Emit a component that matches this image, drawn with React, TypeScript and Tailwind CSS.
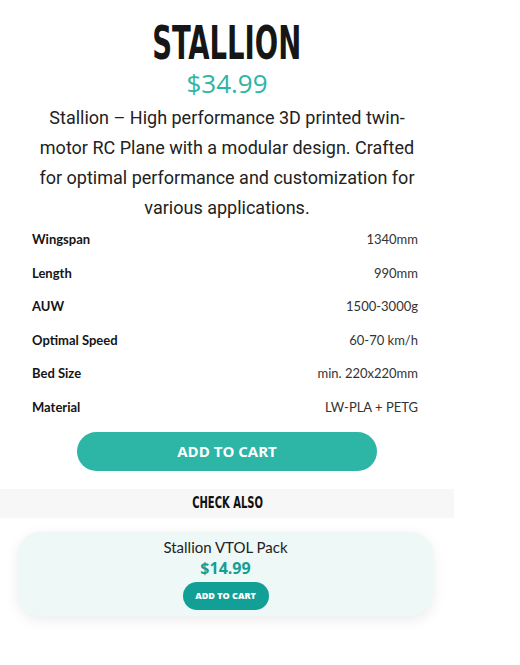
import React from 'react';

const specs: [string, string][] = [
  ['Wingspan', '1340mm'],
  ['Length', '990mm'],
  ['AUW', '1500-3000g'],
  ['Optimal Speed', '60-70 km/h'],
  ['Bed Size', 'min. 220x220mm'],
  ['Material', 'LW-PLA + PETG'],
];

const App: React.FC = () => {
  return (
    <div className="w-[454px] bg-white pb-[40px]">
      <div className="flex flex-col items-center pt-[21px]">
        <h1 className="h-[44px] text-[47px] leading-[44px] font-bold text-[#161616] font-['DejaVu_Sans_Condensed',sans-serif] scale-x-[0.65]">
          STALLION
        </h1>
        <div className="mt-[5px] h-[26px] text-[26px] leading-[26px] text-[#2db5a5] font-['Open_Sans',sans-serif]">
          $34.99
        </div>
        <p className="mt-[7px] px-[27px] text-center text-[18px] leading-[30px] text-[#222] font-['Roboto',sans-serif]">
          Stallion – High performance 3D printed twin-motor RC Plane with a modular design. Crafted for optimal performance and customization for various applications.
        </p>
      </div>

      <div className="pl-[32px] pr-[36px] font-['Lato',sans-serif] text-[13px]">
        {specs.map(([label, value]) => (
          <div key={label} className="flex h-[33.5px] items-center justify-between">
            <span className="font-bold text-[#151515]">{label}</span>
            <span className="text-[#333]">{value}</span>
          </div>
        ))}
      </div>

      <div className="mt-[8px] flex justify-center">
        <button className="h-[39px] w-[300px] rounded-full bg-[#2db5a5] text-[15px] font-bold text-white font-['Open_Sans',sans-serif]">
          ADD TO CART
        </button>
      </div>

      <div className="mt-[18px] flex h-[29px] items-center justify-center bg-[#f7f7f7]">
        <span className="pl-[2px] text-[15px] font-bold text-[#111] font-['DejaVu_Sans_Condensed',sans-serif] scale-x-[0.74]">
          CHECK ALSO
        </span>
      </div>

      <div className="mx-[18px] mt-[14px] flex h-[84px] w-[415px] flex-col items-center rounded-[22px] bg-[#eef8f6] pt-[5px] shadow-[0_4px_14px_rgba(0,0,0,0.08)]">
        <div className="text-[15px] leading-[20px] text-[#222] font-['Lato',sans-serif]">Stallion VTOL Pack</div>
        <div className="mt-[1px] text-[16px] font-bold leading-[20px] text-[#149e94] font-['Open_Sans',sans-serif]">$14.99</div>
        <button className="mt-[4px] h-[28px] w-[86px] rounded-full bg-[#12a096] text-[9px] font-extrabold text-white font-['Open_Sans',sans-serif]">
          ADD TO CART
        </button>
      </div>
    </div>
  );
};

export default App;
